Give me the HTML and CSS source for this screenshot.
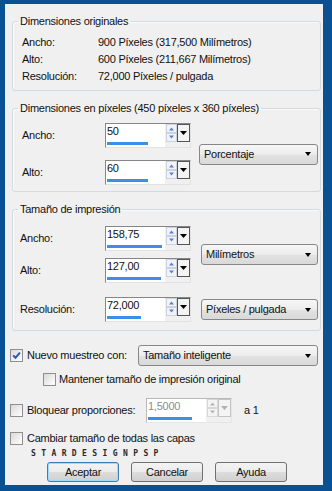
FILE: index.html
```html
<!DOCTYPE html>
<html lang="es">
<head>
<meta charset="utf-8">
<title>Cambiar tamaño</title>
<link rel="stylesheet" href="styles.css">
</head>
<body>
<div class="window">
  <fieldset class="group g1">
    <legend>Dimensiones originales</legend>
    <div class="info">
      <span>Ancho:</span><span>900 Píxeles (317,500 Milímetros)</span>
      <span>Alto:</span><span>600 Píxeles (211,667 Milímetros)</span>
      <span>Resolución:</span><span>72,000 Píxeles / pulgada</span>
    </div>
  </fieldset>

  <fieldset class="group g2">
    <legend>Dimensiones en píxeles (450 píxeles x 360 píxeles)</legend>
    <div class="gbody">
      <div class="fields gap12">
        <div class="frow">
          <span class="flabel w83">Ancho:</span>
          <div class="spin">
            <div class="field"><span>50</span><i class="bar" style="width:41px"></i></div>
            <svg class="spinner" width="11" height="18" viewBox="0 0 11 18"><rect x="0.5" y="0.5" width="10" height="8" fill="#f1f3f8" stroke="#cdd3de"/><rect x="0.5" y="9.5" width="10" height="8" fill="#f1f3f8" stroke="#cdd3de"/><path d="M3 6.5h5L5.5 3.5z" fill="#5c7fd8"/><path d="M3 11.5h5l-2.5 3z" fill="#5c7fd8"/></svg>
            <svg class="arrowbox" width="13" height="18" viewBox="0 0 13 18"><rect x="0.5" y="0.5" width="12" height="17" fill="#f4f4f4" stroke="#555"/><path d="M3 7h7l-3.5 4z" fill="#000"/></svg>
          </div>
        </div>
        <div class="frow">
          <span class="flabel w83">Alto:</span>
          <div class="spin">
            <div class="field"><span>60</span><i class="bar" style="width:41px"></i></div>
            <svg class="spinner" width="11" height="18" viewBox="0 0 11 18"><rect x="0.5" y="0.5" width="10" height="8" fill="#f1f3f8" stroke="#cdd3de"/><rect x="0.5" y="9.5" width="10" height="8" fill="#f1f3f8" stroke="#cdd3de"/><path d="M3 6.5h5L5.5 3.5z" fill="#5c7fd8"/><path d="M3 11.5h5l-2.5 3z" fill="#5c7fd8"/></svg>
            <svg class="arrowbox" width="13" height="18" viewBox="0 0 13 18"><rect x="0.5" y="0.5" width="12" height="17" fill="#f4f4f4" stroke="#555"/><path d="M3 7h7l-3.5 4z" fill="#000"/></svg>
          </div>
        </div>
      </div>
      <div class="dd ml8 w119"><span>Porcentaje</span></div>
    </div>
  </fieldset>

  <fieldset class="group g3">
    <legend>Tamaño de impresión</legend>
    <div class="gbody3">
      <div class="pair">
        <div class="fields gap7">
          <div class="frow">
            <span class="flabel w85">Ancho:</span>
            <div class="spin">
              <div class="field"><span>158,75</span><i class="bar" style="width:55px"></i></div>
              <svg class="spinner" width="11" height="18" viewBox="0 0 11 18"><rect x="0.5" y="0.5" width="10" height="8" fill="#f1f3f8" stroke="#cdd3de"/><rect x="0.5" y="9.5" width="10" height="8" fill="#f1f3f8" stroke="#cdd3de"/><path d="M3 6.5h5L5.5 3.5z" fill="#5c7fd8"/><path d="M3 11.5h5l-2.5 3z" fill="#5c7fd8"/></svg>
              <svg class="arrowbox" width="13" height="18" viewBox="0 0 13 18"><rect x="0.5" y="0.5" width="12" height="17" fill="#f4f4f4" stroke="#555"/><path d="M3 7h7l-3.5 4z" fill="#000"/></svg>
            </div>
          </div>
          <div class="frow">
            <span class="flabel w85">Alto:</span>
            <div class="spin">
              <div class="field"><span>127,00</span><i class="bar" style="width:54px"></i></div>
              <svg class="spinner" width="11" height="18" viewBox="0 0 11 18"><rect x="0.5" y="0.5" width="10" height="8" fill="#f1f3f8" stroke="#cdd3de"/><rect x="0.5" y="9.5" width="10" height="8" fill="#f1f3f8" stroke="#cdd3de"/><path d="M3 6.5h5L5.5 3.5z" fill="#5c7fd8"/><path d="M3 11.5h5l-2.5 3z" fill="#5c7fd8"/></svg>
              <svg class="arrowbox" width="13" height="18" viewBox="0 0 13 18"><rect x="0.5" y="0.5" width="12" height="17" fill="#f4f4f4" stroke="#555"/><path d="M3 7h7l-3.5 4z" fill="#000"/></svg>
            </div>
          </div>
        </div>
        <div class="dd ml10 w117"><span>Milímetros</span></div>
      </div>
      <div class="pair mt14">
        <div class="frow">
          <span class="flabel w85">Resolución:</span>
          <div class="spin">
            <div class="field"><span>72,000</span><i class="bar" style="width:34px"></i></div>
            <svg class="spinner" width="11" height="18" viewBox="0 0 11 18"><rect x="0.5" y="0.5" width="10" height="8" fill="#f1f3f8" stroke="#cdd3de"/><rect x="0.5" y="9.5" width="10" height="8" fill="#f1f3f8" stroke="#cdd3de"/><path d="M3 6.5h5L5.5 3.5z" fill="#5c7fd8"/><path d="M3 11.5h5l-2.5 3z" fill="#5c7fd8"/></svg>
            <svg class="arrowbox" width="13" height="18" viewBox="0 0 13 18"><rect x="0.5" y="0.5" width="12" height="17" fill="#f4f4f4" stroke="#555"/><path d="M3 7h7l-3.5 4z" fill="#000"/></svg>
          </div>
        </div>
        <div class="dd ml10 w117"><span>Píxeles / pulgada</span></div>
      </div>
    </div>
  </fieldset>

  <div class="opt row-nuevo">
    <span class="cb"><svg width="11" height="11" viewBox="0 0 11 11"><path d="M2.2 5.4l2.3 2.4 4.4-5.2" fill="none" stroke="#2f55b4" stroke-width="2"/></svg></span>
    <span class="clabel w111">Nuevo muestreo con:</span>
    <div class="dd w180"><span>Tamaño inteligente</span></div>
  </div>

  <div class="opt row-mantener">
    <span class="cb"></span>
    <span class="clabel">Mantener tamaño de impresión original</span>
  </div>

  <div class="opt row-bloquear">
    <span class="cb"></span>
    <span class="clabel w123">Bloquear proporciones:</span>
    <div class="spin disabled">
      <div class="field"><span>1,5000</span><i class="bar" style="width:44px"></i></div>
      <svg class="spinner" width="11" height="18" viewBox="0 0 11 18"><rect x="0.5" y="0.5" width="10" height="8" fill="#f4f4f4" stroke="#d8d8d8"/><rect x="0.5" y="9.5" width="10" height="8" fill="#f4f4f4" stroke="#d8d8d8"/><path d="M3 6.5h5L5.5 3.5z" fill="#b4b4b4"/><path d="M3 11.5h5l-2.5 3z" fill="#b4b4b4"/></svg>
      <svg class="arrowbox" width="13" height="18" viewBox="0 0 13 18"><rect x="0.5" y="0.5" width="12" height="17" fill="#f4f4f4" stroke="#c4c4c4"/><path d="M3 7h7l-3.5 4z" fill="#b0b0b0"/></svg>
    </div>
    <span class="ratio">a 1</span>
  </div>

  <div class="opt row-cambiar">
    <span class="cb"></span>
    <span class="clabel">Cambiar tamaño de todas las capas</span>
  </div>

  <div class="mark">STARDESIGNPSP</div>

  <div class="buttons">
    <button class="btn default">Aceptar</button>
    <button class="btn">Cancelar</button>
    <button class="btn">Ayuda</button>
  </div>
</div>
</body>
</html>
```

FILE: styles.css
```css
* { box-sizing: border-box; }

html, body {
  margin: 0;
  padding: 0;
  background: #0a5194;
}

body {
  width: 332px;
  height: 491px;
  overflow: hidden;
}

.window {
  width: 332px;
  height: 491px;
  border-style: solid;
  border-color: #0a5194;
  border-width: 4px 9px 6px 5px;
  background: #f0f0f0;
  font: 11px "Liberation Sans", Arial, sans-serif;
  letter-spacing: -0.25px;
  color: #111;
  display: flex;
  flex-direction: column;
}

/* group boxes */
.group {
  margin: 10px 2px 0 7px;
  padding: 0;
  border: 1px solid #d3dbe0;
  border-radius: 3px;
  min-width: 0;
  box-shadow: inset 1px 1px 0 #fbfbfb;
}

.group legend {
  margin-left: 5px;
  padding: 0 2px;
  line-height: 14px;
}

.info {
  padding: 6px 0 5px 9px;
  display: grid;
  grid-template-columns: 76px auto;
  grid-auto-rows: 17px;
  align-items: center;
  line-height: 13px;
}

.gbody {
  padding: 8px 2px 6px 9px;
  display: flex;
  align-items: center;
}

.gbody3 {
  padding: 10px 2px 8px 7px;
  display: flex;
  flex-direction: column;
}

.pair {
  display: flex;
  align-items: center;
}

.mt14 { margin-top: 14px; }

.fields {
  display: flex;
  flex-direction: column;
}
.gap12 { gap: 12px; }
.gap7 { gap: 7px; }

.frow {
  display: flex;
  align-items: center;
}

.flabel { line-height: 13px; }
.w83 { width: 83px; }
.w85 { width: 85px; }

/* spin control */
.spin {
  width: 86px;
  height: 25px;
  display: flex;
  align-items: flex-start;
  border: 1px solid;
  border-color: #868686 #e2e2e2 #e2e2e2 #868686;
}

.field {
  width: 59px;
  height: 23px;
  background: #fff;
  padding: 1px 0 2px 1px;
  display: flex;
  flex-direction: column;
  justify-content: space-between;
  line-height: 13px;
}

.bar {
  display: block;
  height: 3px;
  background: #3a8fe8;
}

.spinner { display: block; margin-left: 1px; }
.arrowbox { display: block; }

.disabled .field { color: #8d8d8d; }
.disabled { border-color: #b9b9b9 #e6e6e6 #e6e6e6 #b9b9b9; }

/* dropdown */
.dd {
  height: 21px;
  display: flex;
  align-items: center;
  justify-content: space-between;
  padding: 0 6px 0 4px;
  border: 1px solid #878787;
  border-radius: 3px;
  background: linear-gradient(#f7f7f7, #ececec 50%, #e2e2e2 51%, #d9d9d9);
  line-height: 13px;
}
.dd::after {
  content: "";
  border-left: 3.5px solid transparent;
  border-right: 3.5px solid transparent;
  border-top: 4px solid #000;
}
.ml8 { margin-left: 8px; }
.ml10 { margin-left: 10px; }
.w119 { width: 119px; }
.w117 { width: 117px; }
.w180 { width: 180px; }

/* option rows */
.opt {
  display: flex;
  align-items: center;
  margin-left: 5px;
  line-height: 13px;
}

.row-nuevo { margin-top: 14px; height: 21px; }
.row-mantener { margin-top: 7px; height: 13px; margin-left: 38px; }
.row-bloquear { margin-top: 12px; height: 25px; }
.row-cambiar { margin-top: 9px; height: 13px; }

.cb {
  flex: none;
  width: 13px;
  height: 13px;
  border: 1px solid #8f8f8f;
  background: linear-gradient(135deg, #d9d9d9, #f4f4f4 70%, #ffffff);
  display: flex;
  align-items: center;
  justify-content: center;
}
.cb svg { display: block; }

.clabel { margin-left: 4px; }
.row-mantener .clabel { margin-left: 3px; }
.w111 { width: 111px; flex: none; }
.w123 { width: 119px; flex: none; }

.ratio { margin-left: 12px; }

/* watermark */
.mark {
  margin: 5px 0 0 26px;
  height: 8px;
  font: bold 8px "DejaVu Sans Mono", monospace;
  line-height: 8px;
  letter-spacing: 5.4px;
  color: #2a2a2a;
}

/* buttons */
.buttons {
  margin: 4px 0 0 42px;
  display: flex;
  gap: 12px;
}

.btn {
  width: 72px;
  height: 20px;
  padding: 0;
  font: 11px "Liberation Sans", Arial, sans-serif;
  letter-spacing: -0.25px;
  color: #111;
  border: 1px solid #707070;
  border-radius: 3px;
  background: linear-gradient(#f3f3f3, #ebebeb 50%, #dddddd 51%, #d0d0d0);
}

.btn.default {
  border-color: #3c7fb1;
  box-shadow: inset 0 0 0 1px #9fdcf7;
}
```
